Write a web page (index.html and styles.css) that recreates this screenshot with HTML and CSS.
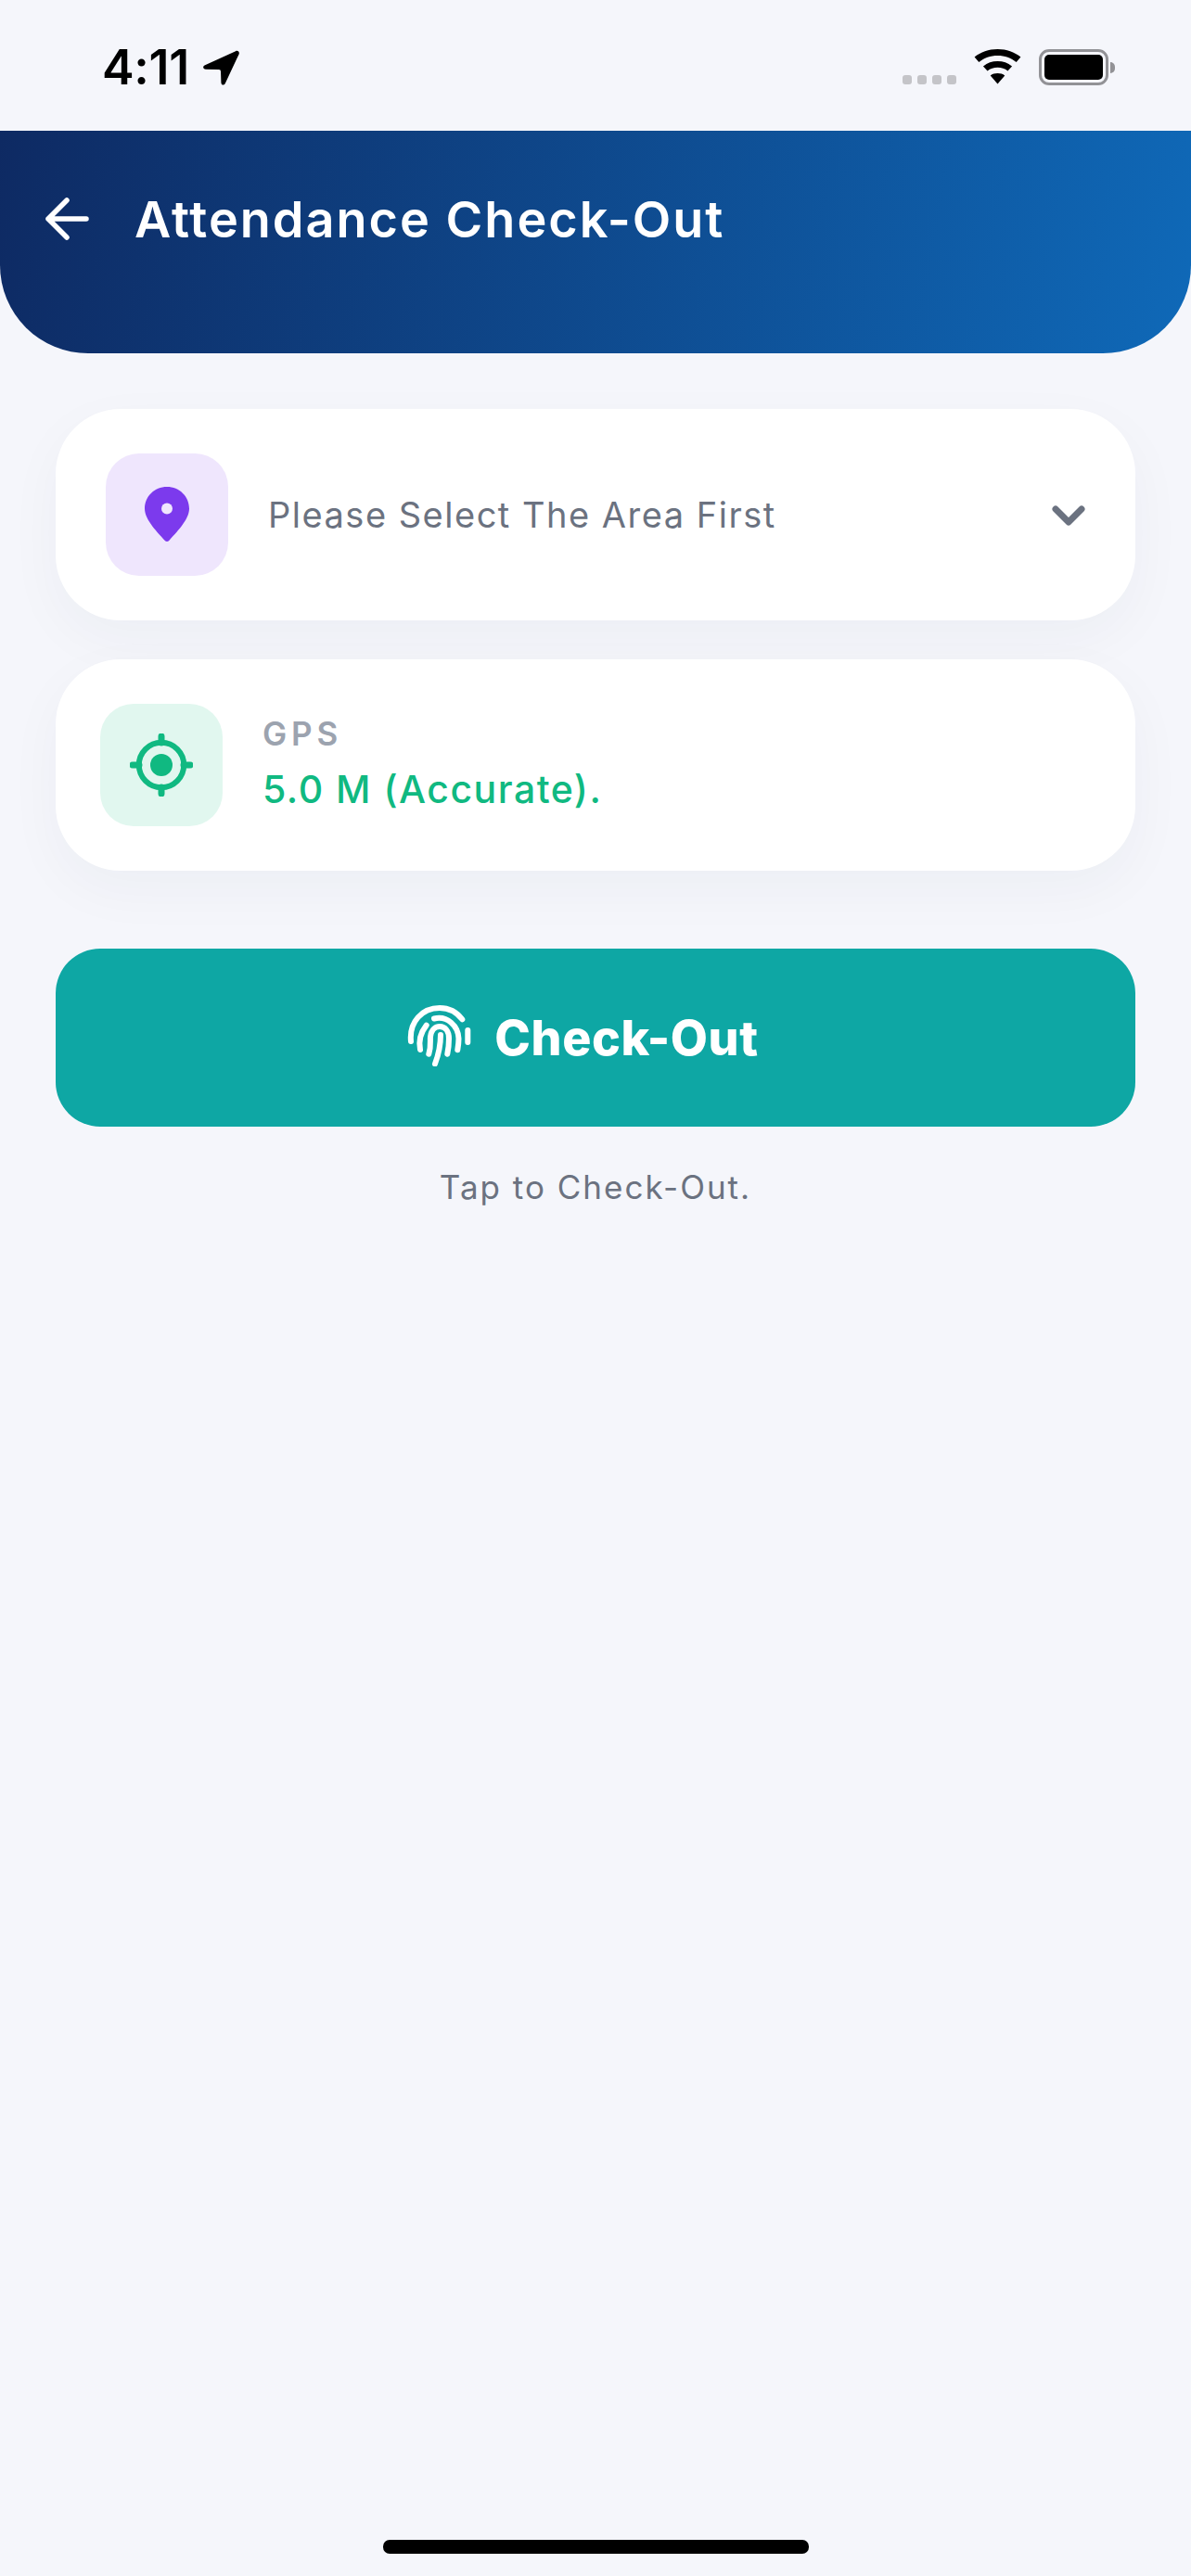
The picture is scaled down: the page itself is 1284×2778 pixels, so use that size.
FILE: index.html
```html
<!DOCTYPE html>
<html lang="en">
<head>
    <meta charset="UTF-8">
    <meta name="viewport" content="width=device-width, initial-scale=1.0">
    <title>Attendance Check-Out</title>
    <link rel="stylesheet" href="styles.css">
</head>
<body>
    <div class="screen">
        <div class="status-bar">
            <div class="status-left">
                <span class="time">4:11</span>
                <svg class="location-arrow" width="39" height="38" viewBox="0 0 39 38">
                    <path d="M35 1.2 C37.5 0 39.5 2 38.6 4.4 L24 35.5 C22.8 38.6 19.6 38.2 19.4 35 L19 23 Q19 21 17 21 L3 20.8 C-.4 20.6 -.8 17.6 2 16.2 Z"/>
                </svg>
            </div>
            <div class="status-right">
                <div class="signal">
                    <span></span><span></span><span></span><span></span>
                </div>
                <svg class="wifi" width="51" height="38" viewBox="0 0 42 38" preserveAspectRatio="none">
                    <path d="M21 0 C29 0 36 3 41.5 8.6 L37.6 14 C33 9.4 27.5 7 21 7 C14.5 7 9 9.4 4.4 14 L.5 8.6 C6 3 13 0 21 0 Z"/>
                    <path d="M21 13 C26 13 30 14.8 33.8 18.4 L30 23.4 C27.5 21 24.5 19.8 21 19.8 C17.5 19.8 14.5 21 12 23.4 L8.2 18.4 C12 14.8 16 13 21 13 Z"/>
                    <path d="M21 26 C23.6 26 25.6 26.8 27.4 28.4 L21 37.5 L14.6 28.4 C16.4 26.8 18.4 26 21 26 Z"/>
                </svg>
                <div class="battery">
                    <div class="battery-body"><div class="battery-fill"></div></div>
                    <div class="battery-cap"></div>
                </div>
            </div>
        </div>

        <header class="app-header">
            <svg class="back-arrow" width="52" height="46" viewBox="0 0 52 46">
                <path d="M47 23 H6 M26 3 L6 23 L26 43"/>
            </svg>
            <h1>Attendance Check-Out</h1>
        </header>

        <main class="content">
            <div class="card card-area">
                <div class="icon-box icon-box-purple">
                    <svg width="48" height="60" viewBox="0 0 48 60">
                        <path fill="#7c3aed" d="M24 0 C37.5 0 48 10.5 48 23.5 C48 36 33 50 26.5 57.8 Q24 60.4 21.5 57.8 C15 50 0 36 0 23.5 C0 10.5 10.5 0 24 0 Z"/>
                        <circle cx="24" cy="23.5" r="6" fill="#efe6fd"/>
                    </svg>
                </div>
                <span class="area-label">Please Select The Area First</span>
                <svg class="chevron" width="38" height="24" viewBox="0 0 38 24">
                    <path d="M6 6 L20 20 L34 6"/>
                </svg>
            </div>

            <div class="card card-gps">
                <div class="icon-box icon-box-green">
                    <svg class="target" width="68" height="68" viewBox="0 0 68 68">
                        <circle cx="34" cy="34" r="24.2"/>
                        <circle class="target-dot" cx="34" cy="34" r="12"/>
                        <path d="M34 3 V10 M34 58 V65 M3 34 H10 M58 34 H65"/>
                    </svg>
                </div>
                <div class="gps-info">
                    <div class="gps-label">GPS</div>
                    <div class="gps-value">5.0 M (Accurate).</div>
                </div>
            </div>

            <button class="check-btn">
                <svg class="fingerprint" width="70" height="70" viewBox="0 0 70 70">
                    <path d="M4 43 C2 22 16 7 35 7 C45 7 53 11 59.3 19.3"/>
                    <path d="M65.3 31 V44"/>
                    <path d="M14 52 C12 42 15 33 20.7 25.7"/>
                    <path d="M29 18.5 C43 15 55 26 55.5 40 C55.5 44 55 48 54.3 52.3"/>
                    <path d="M23.3 56.7 C26 48 24.5 42 25 38 C26 30 31 27 35 27 C41 27 45 32 45 40 C45 45 44.5 51 43.3 56.7"/>
                    <path d="M30 67.3 C33.5 58 36 50 36 36"/>
                </svg>
                <span>Check-Out</span>
            </button>
            <p class="hint">Tap to Check-Out.</p>
        </main>

        <div class="home-indicator"></div>
    </div>
</body>
</html>
```

FILE: styles.css
```css
body {
    margin: 0;
    background: #f5f6fb;
    font-family: Inter, "Liberation Sans", sans-serif;
}

.screen {
    display: flex;
    flex-direction: column;
    min-height: 100vh;
}

/* status bar */
.status-bar {
    display: flex;
    justify-content: space-between;
    height: 141px;
    box-sizing: border-box;
    padding: 53px 82px 0 110px;
}

.status-left {
    display: flex;
    align-items: flex-start;
    gap: 15px;
    height: 39px;
}

.time {
    font-size: 52px;
    line-height: 39px;
    font-weight: 600;
    letter-spacing: -0.3px;
    color: #000;
}

.location-arrow {
    margin-top: 1px;
}

.status-right {
    display: flex;
    align-items: flex-start;
    height: 39px;
}

.signal {
    display: flex;
    gap: 6px;
    margin: 28px 19px 0 0;
}

.signal span {
    width: 10px;
    height: 10px;
    border-radius: 3px;
    background: #c4c4c8;
}

.wifi {
    margin-right: 19px;
}

.battery {
    display: flex;
    align-items: center;
}

.battery-body {
    width: 75px;
    height: 39px;
    box-sizing: border-box;
    padding: 3px;
    border: 3px solid #929296;
    border-radius: 11px;
}

.battery-fill {
    height: 100%;
    border-radius: 5px;
    background: #000;
}

.battery-cap {
    width: 5px;
    height: 12px;
    margin-left: 2px;
    border-radius: 0 5px 5px 0;
    background: #929296;
}

/* top header */
.app-header {
    display: flex;
    align-items: center;
    gap: 47px;
    height: 240px;
    box-sizing: border-box;
    padding: 0 0 50px 46px;
    border-radius: 0 0 95px 95px;
    background: linear-gradient(100deg, #0e2a63 0%, #0f69b8 100%);
}

.app-header h1 {
    margin: 0;
    font-size: 54px;
    font-weight: 600;
    letter-spacing: 2px;
    color: #fff;
}

.back-arrow {
    flex: none;
}

.back-arrow path {
    fill: none;
    stroke: #fff;
    stroke-width: 5.5px;
    stroke-linecap: round;
    stroke-linejoin: round;
}

/* cards */
.content {
    display: flex;
    flex-direction: column;
    padding: 60px 60px 0;
}

.card {
    display: flex;
    align-items: center;
    height: 228px;
    box-sizing: border-box;
    border-radius: 70px;
    background: #fff;
    box-shadow: 0 20px 60px rgba(30, 40, 80, 0.04);
}

.card-area {
    padding: 0 54px;
    gap: 43px;
}

.card-gps {
    margin-top: 42px;
    padding: 0 48px;
    gap: 43px;
}

.icon-box {
    display: flex;
    flex: none;
    align-items: center;
    justify-content: center;
    width: 132px;
    height: 132px;
    border-radius: 36px;
}

.icon-box-purple {
    background: #efe6fd;
}

.icon-box-green {
    background: #e1f7ef;
}

.area-label {
    flex: 1;
    font-size: 38px;
    letter-spacing: 1.5px;
    color: #6b7280;
}

.chevron path {
    fill: none;
    stroke: #6b7280;
    stroke-width: 7px;
    stroke-linecap: round;
    stroke-linejoin: round;
}

.target circle {
    fill: none;
    stroke: #10b981;
    stroke-width: 6px;
}

.target .target-dot {
    fill: #10b981;
    stroke: none;
}

.target path {
    stroke: #10b981;
    stroke-width: 7px;
    stroke-linecap: round;
}

.gps-info {
    margin-bottom: 5px;
}

.gps-label {
    font-size: 35px;
    font-weight: 600;
    letter-spacing: 4.8px;
    color: #9ca3af;
}

.gps-value {
    margin-top: 14px;
    font-size: 41px;
    font-weight: 500;
    letter-spacing: 1.5px;
    color: #10b981;
}

/* check-out button */
.check-btn {
    display: flex;
    align-items: center;
    justify-content: center;
    gap: 24px;
    height: 192px;
    margin-top: 84px;
    padding: 0 27px 0 0;
    border: none;
    border-radius: 48px;
    background: #0ea7a4;
    color: #fff;
    font-family: inherit;
    font-size: 52px;
    font-weight: 800;
    letter-spacing: 0.6px;
}

.fingerprint {
    margin-bottom: 8px;
}

.fingerprint path {
    fill: none;
    stroke: #fff;
    stroke-width: 6px;
    stroke-linecap: round;
}

.hint {
    margin: 44px 0 0;
    text-align: center;
    font-size: 35px;
    letter-spacing: 2px;
    color: #6b7280;
}

.home-indicator {
    align-self: center;
    width: 459px;
    height: 15px;
    margin: auto 0 24px;
    border-radius: 7px;
    background: #000;
}
```
